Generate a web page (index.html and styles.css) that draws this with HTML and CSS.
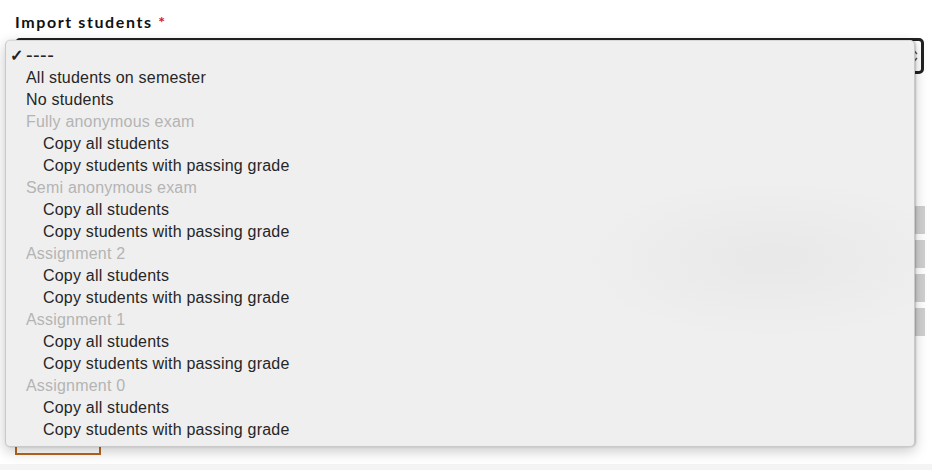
FILE: index.html
```html
<!DOCTYPE html>
<html>
<head>
<meta charset="utf-8">
<link rel="stylesheet" href="styles.css">
</head>
<body>
<div class="page">
  <div class="field">
    <div class="label">Import students <span class="req">*</span></div>
    <div class="select">
      <span class="arrows"><svg width="8" height="16" viewBox="0 0 8 16"><path d="M1 6 L4 2.5 L7 6" fill="none" stroke="#555" stroke-width="1.4"/><path d="M1 10 L4 13.5 L7 10" fill="none" stroke="#555" stroke-width="1.4"/></svg></span>
    </div>
  </div>
  <div class="rows">
    <div class="row"></div>
    <div class="row"></div>
    <div class="row"></div>
    <div class="row"></div>
  </div>
  <div class="actions">
    <div class="btn"></div>
  </div>
  <div class="footer"></div>

  <ul class="menu">
    <li class="opt selected"><span class="check">✓</span><span class="dashes">----</span></li>
    <li class="opt">All students on semester</li>
    <li class="opt">No students</li>
    <li class="grp">Fully anonymous exam</li>
    <li class="opt sub">Copy all students</li>
    <li class="opt sub">Copy students with passing grade</li>
    <li class="grp">Semi anonymous exam</li>
    <li class="opt sub">Copy all students</li>
    <li class="opt sub">Copy students with passing grade</li>
    <li class="grp">Assignment 2</li>
    <li class="opt sub">Copy all students</li>
    <li class="opt sub">Copy students with passing grade</li>
    <li class="grp">Assignment 1</li>
    <li class="opt sub">Copy all students</li>
    <li class="opt sub">Copy students with passing grade</li>
    <li class="grp">Assignment 0</li>
    <li class="opt sub">Copy all students</li>
    <li class="opt sub">Copy students with passing grade</li>
  </ul>
</div>
</body>
</html>
```

FILE: styles.css
```css
html, body {
  margin: 0;
  padding: 0;
  background: #fff;
}
.page {
  position: relative;
  width: 932px;
  height: 470px;
  overflow: hidden;
}
.field {
  padding: 12px 8px 0 15px;
}
.label {
  font-family: Lato, "Liberation Sans", sans-serif;
  font-size: 16px;
  font-weight: 700;
  letter-spacing: 1.6px;
  color: #111;
  height: 24px;
  line-height: 20px;
}
.req {
  color: #e0141e;
  letter-spacing: 0;
}
.select {
  margin-top: 2px;
  height: 30px;
  border: 3px solid #222;
  border-radius: 5px;
  display: flex;
  justify-content: flex-end;
  align-items: center;
  padding-right: 3px;
}
.arrows {
  display: flex;
}
.rows {
  margin: 132px 7px 0 15px;
  display: flex;
  flex-direction: column;
  gap: 6px;
}
.row {
  height: 28px;
  background: #d0d0d0;
}
.actions {
  padding: 81px 0 0 15px;
}
.btn {
  width: 82px;
  height: 34px;
  border: 2px solid #b8661c;
}
.footer {
  margin-top: 9px;
  height: 20px;
  background: #f4f4f4;
}
.menu {
  position: absolute;
  left: 5px;
  top: 40px;
  width: 908px;
  height: 396px;
  margin: 0;
  padding: 4px 0 5px 0;
  list-style: none;
  border: 1px solid #c9c9c9;
  border-top-color: #d8d8d8;
  border-radius: 5px;
  background:
    radial-gradient(ellipse 190px 80px at 765px 218px, rgba(230,230,230,0.75), rgba(239,239,239,0) 100%),
    #efefef;
  box-shadow: 0 4px 14px rgba(0,0,0,0.22), 1px 0 2px rgba(0,0,0,0.2);
  font-family: "Liberation Sans", Arial, sans-serif;
  font-size: 16px;
  letter-spacing: 0.2px;
}
.menu li {
  position: relative;
  height: 22px;
  line-height: 22px;
  padding-left: 20px;
  color: #262626;
  white-space: nowrap;
}
.menu li.sub {
  padding-left: 37px;
}
.menu li.grp {
  color: #b4b4b4;
}
.dashes {
  font-size: 20px;
  letter-spacing: 0.4px;
  line-height: 18px;
  vertical-align: top;
  display: inline-block;
  margin-top: 1px;
}
.check {
  position: absolute;
  left: 4px;
  top: 0;
  font-size: 16px;
  font-weight: 700;
  color: #222;
}
```
